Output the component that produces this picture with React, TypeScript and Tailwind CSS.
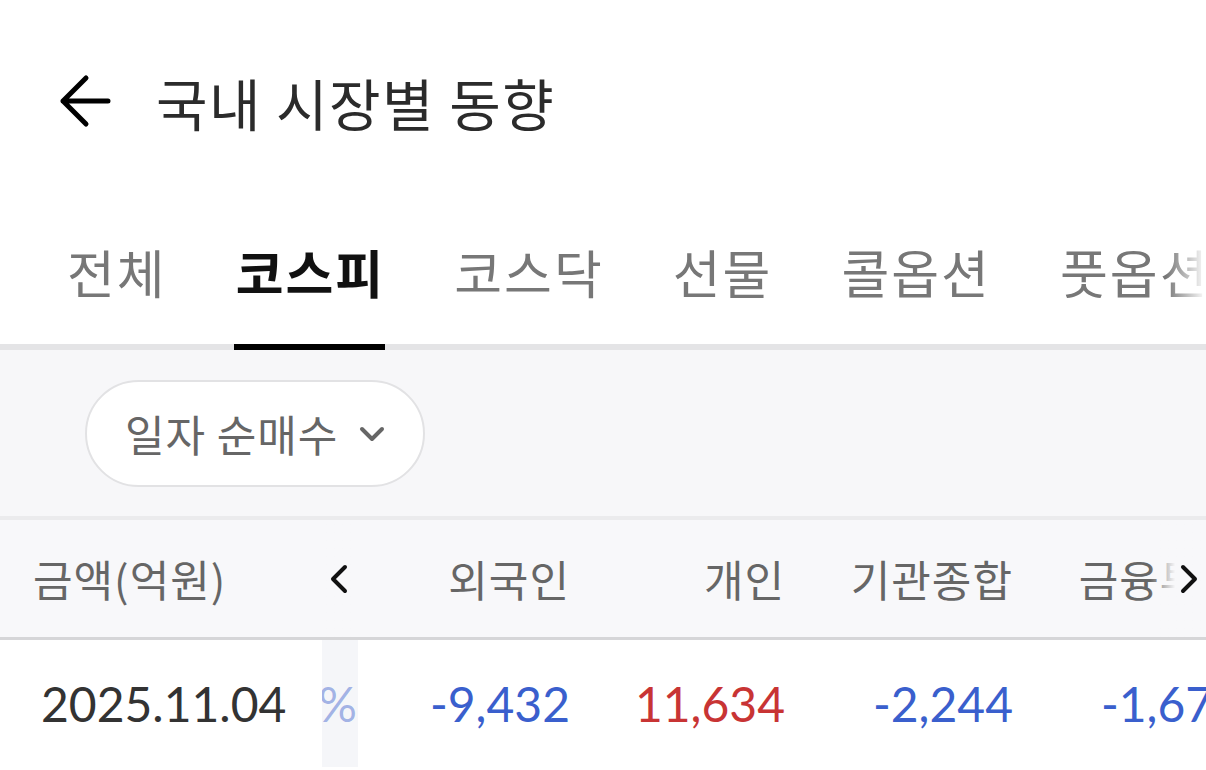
import { ChevronDown } from 'lucide-react';

const tabs = ['전체', '코스피', '코스닥', '선물', '콜옵션', '풋옵션'];

const columns = [
    { label: '외국인', value: '-9,432', up: false, w: 'w-[212px]' },
    { label: '개인', value: '11,634', up: true, w: 'w-[215px]' },
    { label: '기관종합', value: '-2,244', up: false, w: 'w-[228px]' },
    { label: '금융투자', value: '-1,675', up: false, w: 'w-[228px]' },
];

function BackArrow() {
    return (
        <svg width="56" height="56" viewBox="0 0 56 56" fill="none" className="ml-[56px]">
            <path
                d="M52 27 H7 M30 4 L7 27 L30 50"
                stroke="#000"
                strokeWidth="5"
                strokeLinecap="round"
                strokeLinejoin="round"
            />
        </svg>
    );
}

function Chevron({ dir }: { dir: 'left' | 'right' }) {
    return (
        <svg width="22" height="30" viewBox="0 0 22 30" fill="none">
            <path
                d={dir === 'left' ? 'M17 3 L5 15 L17 27' : 'M5 3 L17 15 L5 27'}
                stroke="#111"
                strokeWidth="4"
                strokeLinecap="round"
                strokeLinejoin="round"
            />
        </svg>
    );
}

export default function App() {
    return (
        <div className="w-[1206px] h-[770px] overflow-hidden bg-white font-['Noto_Sans_CJK_KR',sans-serif]">
            {/* header */}
            <div className="flex h-[204px] items-center">
                <BackArrow />
                <h1 className="ml-[44px] text-[56px] leading-none text-[#2b2b2b] tracking-[1.5px]">
                    국내 시장별 동향
                </h1>
            </div>

            {/* tabs */}
            <div className="relative flex h-[146px] items-stretch gap-[69px] border-b-[6px] border-[#e4e4e6] pl-[67px] whitespace-nowrap">
                {tabs.map((t, i) => (
                    <div key={t} className="relative flex items-center pb-[4px]">
                        <span
                            className={
                                i === 1
                                    ? 'text-[52px] leading-none tracking-[2px] font-bold text-[#111]'
                                    : 'text-[52px] leading-none tracking-[2px] text-[#777]'
                            }
                        >
                            {t}
                        </span>
                        {i === 1 && (
                            <div className="absolute -left-[2px] w-[151px] -bottom-[6px] h-[6px] bg-black" />
                        )}
                    </div>
                ))}
                <div className="absolute right-0 top-0 h-full w-[40px] bg-gradient-to-r from-white/0 to-white" />
            </div>

            {/* filter */}
            <div className="bg-[#f7f7f9] px-[85px] pt-[30px] pb-[29px]">
                <button className="flex h-[107px] w-[340px] items-center gap-[14px] rounded-full border-2 border-[#e2e2e4] bg-white pl-[38px]">
                    <span className="text-[43px] leading-none tracking-[1px] text-[#666]">일자 순매수</span>
                    <ChevronDown size={40} strokeWidth={2.4} color="#666" />
                </button>
            </div>

            {/* table */}
            <div className="border-t-4 border-[#ebebed]">
                <div className="flex h-[120px] border-b-[3px] border-[#d6d6d8] bg-[#f8f8fa]">
                    <div className="flex w-[322px] shrink-0 items-center pl-[33px] text-[43px] leading-none tracking-[1px] text-[#666]">
                        금액(억원)
                    </div>
                    <div className="relative flex flex-1 items-center overflow-hidden">
                        <div className="w-[36px] shrink-0" />
                        {columns.map((c) => (
                            <div
                                key={c.label}
                                className={`${c.w} shrink-0 text-right text-[43px] leading-none tracking-[1px] text-[#666] whitespace-nowrap`}
                            >
                                {c.label}
                            </div>
                        ))}
                        <div className="absolute left-0 top-0 flex h-full w-[40px] items-center bg-gradient-to-r from-[#f8f8fa] from-70% to-[#f8f8fa]/0 pl-[6px]">
                            <Chevron dir="left" />
                        </div>
                        <div className="absolute right-0 top-0 flex h-full w-[56px] items-center justify-end bg-gradient-to-r from-[#f8f8fa]/0 to-[#f8f8fa] to-45% pr-[6px]">
                            <Chevron dir="right" />
                        </div>
                    </div>
                </div>

                <div className="flex h-[127px] font-['Lato',sans-serif] text-[48px] leading-none">
                    <div className="flex w-[322px] shrink-0 items-center pl-[41px] text-[#333]">
                        2025.11.04
                    </div>
                    <div className="flex flex-1 items-center overflow-hidden">
                        <div className="flex h-full w-[36px] shrink-0 items-center justify-end overflow-hidden bg-[#f5f6f9] pr-[1px] text-[#3a5fcd]/45">
                            <span className="shrink-0">%</span>
                        </div>
                        {columns.map((c) => (
                            <div
                                key={c.label}
                                className={`${c.w} shrink-0 text-right whitespace-nowrap ${
                                    c.up ? 'text-[#c83434]' : 'text-[#3a5fcd]'
                                }`}
                            >
                                {c.value}
                            </div>
                        ))}
                    </div>
                </div>
            </div>
        </div>
    );
}
